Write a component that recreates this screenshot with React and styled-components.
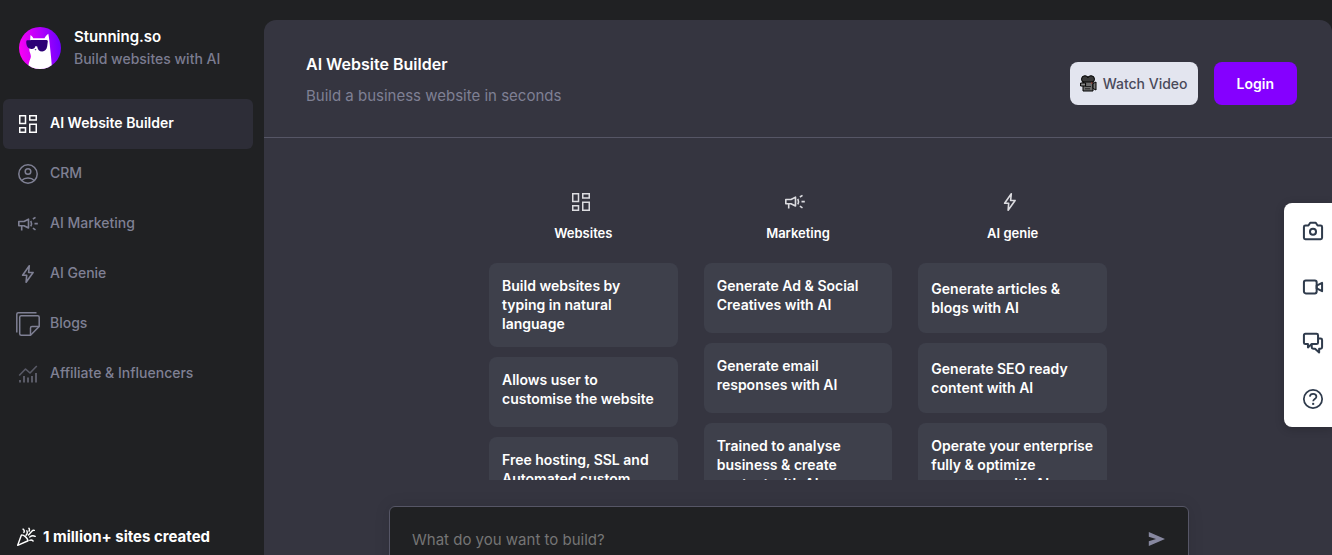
import React, { useState } from 'react';
import styled, { createGlobalStyle } from 'styled-components';

const GlobalStyle = createGlobalStyle`
  * {
    box-sizing: border-box;
  }

  body {
    margin: 0;
    background: #202123;
    font-family: Inter, 'Liberation Sans', sans-serif;
    font-size: 14px;
    color: #ffffff;
  }

  button,
  input {
    font-family: inherit;
  }

  h1,
  h2,
  p,
  ul {
    margin: 0;
    padding: 0;
  }
`;

const Page = styled.div`
  display: flex;
  height: 100vh;
  overflow: hidden;
`;

/* Sidebar */

const Sidebar = styled.aside`
  display: flex;
  flex-direction: column;
  flex: 0 0 264px;
  padding: 26px 11px 8px 3px;
`;

const Brand = styled.a`
  display: flex;
  align-items: center;
  gap: 13px;
  padding-left: 16px;
  color: inherit;
  text-decoration: none;
`;

const BrandName = styled.p`
  font-size: 15px;
  font-weight: 600;
  line-height: 22px;
`;

const BrandTagline = styled.p`
  font-size: 14px;
  font-weight: 500;
  line-height: 22px;
  color: #7b7c90;
`;

const Nav = styled.nav`
  display: flex;
  flex-direction: column;
  margin-top: 29px;
`;

const NavItem = styled.a`
  display: flex;
  align-items: center;
  gap: 10px;
  height: 50px;
  padding: 0 13px 4px;
  border-radius: 6px;
  font-size: 14px;
  font-weight: ${(props) => (props.$active ? 600 : 500)};
  text-decoration: none;
  color: ${(props) => (props.$active ? '#ffffff' : '#7f8094')};
  background: ${(props) => (props.$active ? '#2d2d37' : 'transparent')};

  svg {
    flex: none;
    margin-top: 4px;
  }
`;

const SitesCreated = styled.p`
  display: flex;
  align-items: center;
  gap: 7px;
  margin-top: auto;
  padding-left: 13px;
  font-size: 15px;
  font-weight: 700;
  line-height: 20px;
`;

/* Main panel */

const Main = styled.main`
  display: flex;
  flex-direction: column;
  flex: 1;
  min-width: 0;
  margin-top: 20px;
  border-radius: 12px 12px 0 0;
  background: #353540;
`;

const Header = styled.header`
  display: flex;
  align-items: center;
  justify-content: space-between;
  flex: none;
  padding: 28px 35px 25px 42px;
  border-bottom: 1px solid #565666;
`;

const Title = styled.h1`
  font-size: 16px;
  font-weight: 600;
  line-height: 32px;
`;

const Subtitle = styled.p`
  font-size: 15px;
  line-height: 32px;
  color: #7f8094;
`;

const Actions = styled.div`
  display: flex;
  gap: 16px;
  padding-top: 6px;
`;

const ActionButton = styled.button`
  display: flex;
  align-items: center;
  gap: 6px;
  height: 43px;
  padding: ${(props) => (props.$primary ? '0 23px' : '0 10px')};
  border: 0;
  border-radius: 8px;
  font-size: 14px;
  font-weight: ${(props) => (props.$primary ? 600 : 500)};
  color: ${(props) => (props.$primary ? '#ffffff' : '#4a4a5a')};
  background: ${(props) => (props.$primary ? '#8500ff' : '#e3e5ef')};
  cursor: pointer;
`;

const Scroller = styled.div`
  flex: 1;
  min-height: 0;
  overflow: hidden;
  padding-top: 52px;
`;

const Columns = styled.div`
  display: grid;
  grid-template-columns: repeat(3, 1fr);
  gap: 26px;
  max-width: 618px;
  margin: 0 auto;
`;

const ColumnHead = styled.div`
  display: flex;
  flex-direction: column;
  align-items: center;
  gap: 9px;
  margin-bottom: 20px;
  color: #dcdce0;

  svg {
    margin-right: 5px;
  }
`;

const ColumnTitle = styled.h2`
  font-size: 13px;
  font-weight: 600;
  line-height: 20px;
  color: #ffffff;
`;

const CardList = styled.ul`
  display: flex;
  flex-direction: column;
  gap: 10px;
  list-style: none;
`;

const Card = styled.li`
  display: flex;
  align-items: ${(props) => (props.$centered ? 'center' : 'flex-start')};
  min-height: 70px;
  padding: 13px 13px 14px;
  border-radius: 8px;
  background: #3e404b;
  font-size: 14px;
  font-weight: 600;
  line-height: 19px;
`;

const Composer = styled.form`
  flex: 0 0 75px;
  min-height: 0;
  padding: 26px 18px 0 0;
`;

const ComposerBox = styled.div`
  display: flex;
  align-items: center;
  max-width: 800px;
  height: 66px;
  margin: 0 auto;
  padding: 0 22px;
  border: 1px solid #565666;
  border-radius: 6px;
  background: #202123;
  box-shadow: 0 0 16px rgba(0, 0, 0, 0.1);
`;

const Prompt = styled.input`
  flex: 1;
  min-width: 0;
  padding: 0;
  border: 0;
  outline: 0;
  background: transparent;
  font-size: 15px;
  color: #ffffff;

  &::placeholder {
    color: #757575;
  }
`;

const SendButton = styled.button`
  display: flex;
  padding: 0;
  border: 0;
  background: transparent;
  color: #8788a0;
  cursor: pointer;
`;

/* Recorder panel pinned to the right edge, over the page */

const Dock = styled.div`
  position: fixed;
  top: 203px;
  right: 0;
  display: flex;
  flex-direction: column;
  width: 48px;
  border-radius: 8px 0 0 8px;
  background: #ffffff;
  box-shadow: 0 2px 10px rgba(0, 0, 0, 0.2);
`;

const DockButton = styled.button`
  display: flex;
  align-items: center;
  height: 56px;
  padding: 0 0 0 18px;
  border: 0;
  background: transparent;
  color: #2f3b4c;
  cursor: pointer;
`;

/* Icons */

function Icon({ size = 24, stroke = 1.6, children }) {
  return (
    <svg
      width={size}
      height={size}
      viewBox="0 0 24 24"
      fill="none"
      stroke="currentColor"
      strokeWidth={stroke}
      strokeLinejoin="round"
      aria-hidden="true"
    >
      {children}
    </svg>
  );
}

const DashboardIcon = () => (
  <Icon stroke={1.5}>
    <path strokeLinejoin="miter" d="M3.750 3.750h5.750v7.750h-5.750zM13.750 3.750h6.500v4.250h-6.500zM3.750 15.750h5.750v4.500h-5.750zM13.750 12.250h6.500v8h-6.500z" />
  </Icon>
);

const UserIcon = () => (
  <Icon stroke={1.5}>
    <circle cx="12" cy="12" r="9.200" />
    <circle cx="12" cy="9.500" r="2.800" />
    <path d="M5.600 18.600c1.600-1.700 3.900-2.600 6.400-2.600s4.800.9 6.400 2.600" />
  </Icon>
);

const MegaphoneIcon = () => (
  <Icon>
    <path d="M2.800 9.500h5.200l4.500-2.300v8.800l-4.500-2.300H2.800zM5.700 13.700v4.800" />
    <path d="M14.800 8.800c.9 1.800.9 3.800 0 5.600M18.500 11.600h3.300M16.900 7l2.600-1.700M16.900 16.200l2.600 1.700" />
  </Icon>
);

const BoltIcon = () => (
  <Icon>
    <path d="M13.300 3.700 6.600 13.300h4.100l-.6 7 7-9.800h-4.500z" />
  </Icon>
);

const BlogsIcon = () => (
  <Icon stroke={1.5}>
    <path d="M.8 20.500V2.300C.8 1.400 1.400.8 2.300.8h18.200" />
    <path d="M5.200 3.700h16.500c.9 0 1.500.6 1.500 1.500v9.300l-8.700 8.700H5.200c-.9 0-1.500-.6-1.500-1.500V5.200c0-.9.6-1.500 1.500-1.500z" />
    <path d="M23.200 14.500h-7.200c-.9 0-1.500.6-1.500 1.500v7.200" />
  </Icon>
);

const GrowthIcon = () => (
  <Icon>
    <g opacity="0.6">
      <path d="m3.200 13.500 6.300-6.500 4.500 4L20.800 4" />
      <path d="M4 20.500v-2.500M8 20.500v-6.500M12 20.500v-5M16 20.500v-6.500M20 20.500v-9.500" strokeWidth="2" />
    </g>
  </Icon>
);

const PartyIcon = () => (
  <Icon size={20} stroke={1.7}>
    <path d="M6.500 9.500 2 22l12.500-5.500c-.7-3.200-4.500-6.800-8-7z" />
    <path
      strokeLinecap="round"
      d="M12 10c2-2.300 1.800-4 1-5.500M8.500 2.500c1.500 1 1.800 2.500 1 4M15 9.500 19 5c.8-.9 1.800-1.200 3-1M16.500 12c2.500-2 4.500-1.800 6.500-.8M16.500 16c1.600-.6 3-.2 4 .8M15.500 1.500c.8 1 .8 2.300.2 3.500"
    />
  </Icon>
);

const SendIcon = () => (
  <svg width="18" height="18" viewBox="0 0 18 18" fill="currentColor" aria-hidden="true">
    <path d="M.8 2 17 9 .8 16v-4.800L8 9 .8 6.800z" />
  </svg>
);

const CameraIcon = () => (
  <Icon size={22} stroke={2.2}>
    <path d="M3.700 6H7l2-3h6l2 3h3.300c.9 0 1.600.7 1.600 1.600v11.800c0 .9-.7 1.600-1.600 1.600H3.700c-.9 0-1.600-.7-1.600-1.600V7.600C2.100 6.700 2.800 6 3.700 6z" />
    <circle cx="12" cy="12.800" r="3.300" />
  </Icon>
);

const VideoIcon = () => (
  <Icon size={22} stroke={2.2}>
    <rect x="2.100" y="5" width="13.900" height="14" rx="2" />
    <path d="m16 10.500 5.900-3v9L16 13.500z" />
  </Icon>
);

const ChatIcon = () => (
  <Icon size={22} stroke={2.2}>
    <path d="M3.600 2h12.300c.9 0 1.600.7 1.600 1.600v8c0 .9-.7 1.600-1.600 1.600H10.500L6.500 16.800v-3.600H3.600c-.9 0-1.500-.7-1.500-1.600v-8C2.100 2.700 2.700 2 3.600 2z" />
    <path d="M17.500 7.200h2.800c.9 0 1.600.7 1.600 1.600v7.900c0 .9-.7 1.600-1.600 1.600h-1.600v4l-4.500-4h-2c-.9 0-1.600-.7-1.600-1.600v-2.500" />
  </Icon>
);

const HelpIcon = () => (
  <Icon size={22} stroke={1.9}>
    <circle cx="12" cy="12" r="10" />
    <path d="M8.500 9.400c.3-1.900 1.700-2.900 3.600-2.900 2.100 0 3.600 1.200 3.600 3 0 2.500-3.500 2.600-3.500 5" />
    <path d="M11.100 17.300h2.200" strokeWidth="2.200" />
  </Icon>
);

const MovieCameraIcon = () => (
  <svg width="17" height="17" viewBox="0 0 17 17" aria-hidden="true">
    <circle cx="5" cy="4.200" r="3.500" fill="#3a3a3a" stroke="#000" />
    <circle cx="11" cy="4.200" r="3.500" fill="#3a3a3a" stroke="#000" />
    <path d="M4 3h8v5H4z" fill="#3a3a3a" />
    <path d="M3 7h10v9H3z" fill="#6d6d6d" stroke="#000" />
    <path d="M.6 8h5v3h-5z" fill="#8a8a8a" stroke="#000" />
    <path d="M13 8.500l3-1.500v8l-3-1.500z" fill="#777" stroke="#000" />
    <path d="M5 11.500h6M5 13.800h5" stroke="#222" />
    <path d="M11 8h1.500" stroke="#b0392e" />
  </svg>
);

const Logo = () => (
  <svg width="42" height="42" viewBox="0 0 42 42" aria-hidden="true">
    <defs>
      <linearGradient id="logoFill" x1="0" x2="1" y1="0.200" y2="0.100">
        <stop offset="0" stopColor="#f500f5" />
        <stop offset="0.500" stopColor="#b400fb" />
        <stop offset="1" stopColor="#6a00ff" />
      </linearGradient>
      <clipPath id="logoClip">
        <circle cx="21" cy="21" r="21" />
      </clipPath>
    </defs>
    <g clipPath="url(#logoClip)">
      <rect width="42" height="42" fill="url(#logoFill)" />
      <path
        d="M11.500 8c1.300.8 2.200 2 2.800 3.300h11.200C26.400 9.700 27.700 8 29.300 6.800c.9 4.200 1.200 8.200 1.700 13 .6 6 1.500 13 2 22.200H9c.3-4.300 1.200-7.600 2.600-11 .8-2-.2-4-1-6.500-.5-2-.3-4 .2-6z"
        fill="#ffffff"
      />
      <path
        d="M8 13.300c4-.4 14-.4 19.500-.2 1 .1 1.400.7 1.300 1.500l-.6 4.700c-.5 3.300-2.300 5.200-5 5.200-2.900 0-4.700-1.900-5-5l-1.700-.6c-.5 2.300-1.900 3.200-4.100 3-3-.1-4.600-1.800-5-4.800-.2-1.500-.4-3.500.6-3.800z"
        fill="#2d0076"
      />
      <path d="M15.500 22.300h2l-1 1.200z" fill="#2d0076" />
    </g>
  </svg>
);

const navItems = [
  { label: 'AI Website Builder', icon: DashboardIcon },
  { label: 'CRM', icon: UserIcon },
  { label: 'AI Marketing', icon: MegaphoneIcon },
  { label: 'AI Genie', icon: BoltIcon },
  { label: 'Blogs', icon: BlogsIcon },
  { label: 'Affiliate & Influencers', icon: GrowthIcon },
];

const columns = [
  {
    title: 'Websites',
    icon: DashboardIcon,
    cards: [
      'Build websites by typing in natural language',
      'Allows user to customise the website',
      'Free hosting, SSL and Automated custom domains',
    ],
  },
  {
    title: 'Marketing',
    icon: MegaphoneIcon,
    cards: [
      'Generate Ad & Social Creatives with AI',
      'Generate email responses with AI',
      'Trained to analyse business & create content with AI',
    ],
  },
  {
    title: 'AI genie',
    icon: BoltIcon,
    centered: true,
    cards: [
      'Generate articles & blogs with AI',
      'Generate SEO ready content with AI',
      'Operate your enterprise fully & optimize resources with AI',
    ],
  },
];

const dockItems = [
  { label: 'Take screenshot', icon: CameraIcon },
  { label: 'Record video', icon: VideoIcon },
  { label: 'Chat', icon: ChatIcon },
  { label: 'Help', icon: HelpIcon },
];

function App() {
  const [active, setActive] = useState('AI Website Builder');
  const [prompt, setPrompt] = useState('');

  return (
    <Page>
      <GlobalStyle />
      <Sidebar>
        <Brand href="#home">
          <Logo />
          <div>
            <BrandName>Stunning.so</BrandName>
            <BrandTagline>Build websites with AI</BrandTagline>
          </div>
        </Brand>
        <Nav>
          {navItems.map(({ label, icon: ItemIcon }) => (
            <NavItem key={label} href="#" $active={label === active} onClick={() => setActive(label)}>
              <ItemIcon />
              {label}
            </NavItem>
          ))}
        </Nav>
        <SitesCreated>
          <PartyIcon />
          1 million+ sites created
        </SitesCreated>
      </Sidebar>

      <Main>
        <Header>
          <div>
            <Title>AI Website Builder</Title>
            <Subtitle>Build a business website in seconds</Subtitle>
          </div>
          <Actions>
            <ActionButton type="button">
              <MovieCameraIcon />
              Watch Video
            </ActionButton>
            <ActionButton type="button" $primary>
              Login
            </ActionButton>
          </Actions>
        </Header>

        <Scroller>
          <Columns>
            {columns.map(({ title, icon: ColumnIcon, centered, cards }) => (
              <section key={title}>
                <ColumnHead>
                  <ColumnIcon />
                  <ColumnTitle>{title}</ColumnTitle>
                </ColumnHead>
                <CardList>
                  {cards.map((text) => (
                    <Card key={text} $centered={centered}>
                      {text}
                    </Card>
                  ))}
                </CardList>
              </section>
            ))}
          </Columns>
        </Scroller>

        <Composer onSubmit={(e) => e.preventDefault()}>
          <ComposerBox>
            <Prompt
              type="text"
              aria-label="What do you want to build?"
              placeholder="What do you want to build?"
              value={prompt}
              onChange={(e) => setPrompt(e.target.value)}
            />
            <SendButton type="submit" aria-label="Send">
              <SendIcon />
            </SendButton>
          </ComposerBox>
        </Composer>
      </Main>

      <Dock>
        {dockItems.map(({ label, icon: DockIcon }) => (
          <DockButton key={label} type="button" aria-label={label}>
            <DockIcon />
          </DockButton>
        ))}
      </Dock>
    </Page>
  );
}

export default App;
